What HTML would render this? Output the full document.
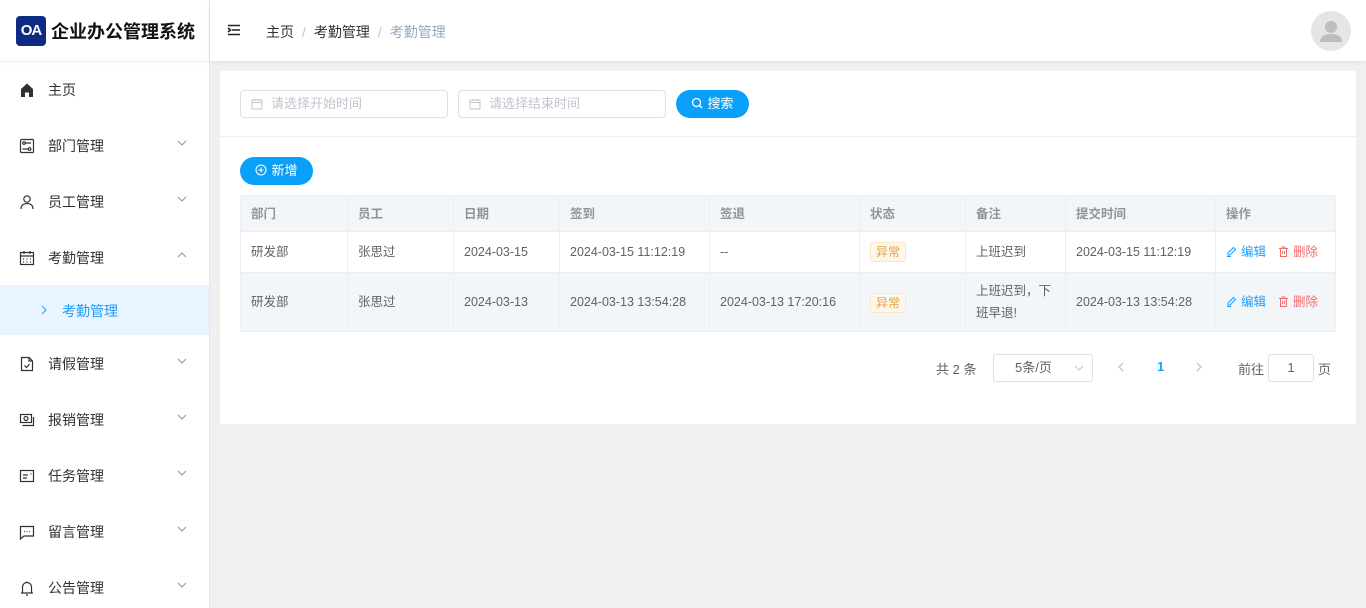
<!DOCTYPE html>
<html><head><meta charset="utf-8"><style>
*{box-sizing:border-box;margin:0;padding:0}
body{width:1366px;height:608px;overflow:hidden;font-family:"Liberation Sans","Noto Sans CJK SC",sans-serif;font-size:13px;color:#303133;background:#f0f0f0;position:relative}
.side{position:absolute;left:0;top:0;width:210px;height:608px;background:#fff;border-right:1px solid #e6e6e6}
.logo{position:absolute;left:16px;top:16px;height:30px;display:flex;align-items:center;white-space:nowrap}
.logo b{display:inline-block;width:30px;height:30px;background:#0d2b80;color:#fff;border-radius:4px;font-size:15px;line-height:30px;text-align:center;font-weight:bold;letter-spacing:-1px}
.logo span{margin-left:5px;font-size:18px;font-weight:bold;color:#111}
.logoline{position:absolute;left:0;top:61px;width:209px;height:1px;background:#eee;box-shadow:0 1px 4px rgba(0,0,0,.06)}
.mi{position:absolute;left:0;width:209px;height:30px;display:flex;align-items:center;font-size:14px;color:#303133}
.mi svg{position:absolute;left:19px;width:16px;height:16px}
.mi .t{position:absolute;left:48px}
.mi .ar{position:absolute;left:177px;top:7px;width:10px;height:10px}
.sub{position:absolute;left:0;top:285px;width:209px;height:50px;background:#e8f4ff;color:#1a9fff;font-size:14px}
.hdr{position:absolute;left:210px;top:0;width:1156px;height:61px;background:#fff;box-shadow:0 1px 4px rgba(0,0,0,.08)}
.bc{position:absolute;left:56px;top:22px;font-size:14px;color:#303133}
.bc i{font-style:normal;color:#c0c4cc;margin:0 8px}
.avatar{position:absolute;left:1101px;top:11px;width:40px;height:40px;border-radius:50%;background:#e5e5e5;overflow:hidden}
.card{position:absolute;left:220px;top:71px;width:1136px;height:353px;background:#fff}
.inp{position:absolute;top:19px;height:28px;width:208px;border:1px solid #dcdfe6;border-radius:4px;color:#c0c4cc;font-size:13px;line-height:26px;padding-left:30px}
.inp svg{position:absolute;left:10px;top:7px}
.btn{position:absolute;background:#0aa0fa;color:#fff;border-radius:14px;height:28px;font-size:13px;line-height:28px;text-align:center}
.sep{position:absolute;left:0;top:65px;width:1136px;height:1px;background:#ebeef5}
table{position:absolute;left:20px;top:124px;border-collapse:collapse;width:1095px;table-layout:fixed;font-size:12.5px}
td,th{border:1px solid #ebeef5;padding:0 10px;text-align:left;color:#606266;font-weight:normal;vertical-align:middle;line-height:20px}
th{height:36px;background:#f3f6f9;color:#909399;font-weight:bold}
tr.r1 td{height:41px}
tr.r2 td{height:59px;background:#f3f6f9;line-height:22px}
.tag{display:inline-block;border:1px solid #fbe7c8;background:#fdf6ec;color:#e6a23c;font-size:12px;height:20px;line-height:18px;padding:0 5px;border-radius:3px;vertical-align:middle}
.ed{color:#1a9fff}.del{color:#f56c6c;margin-left:12px}
.ed svg,.del svg{vertical-align:-1px;margin-right:4px}
.pg{position:absolute;top:283px;font-size:13px;color:#606266}
</style></head><body>
<div class="side">
<div class="logo"><b>OA</b><span>企业办公管理系统</span></div>
<div class="logoline"></div>
<div class="mi" style="top:75px"><svg viewBox="0 0 16 16"><path d="M2 7L8 1.5 14 7V15H10V10.5H6V15H2Z" fill="#303133"/></svg><span class="t">主页</span></div>
<div class="mi" style="top:131px"><svg viewBox="0 0 16 16" fill="none" stroke="#303133" stroke-width="1.2"><rect x="1.5" y="1.5" width="13" height="13" rx="1"/><circle cx="5" cy="5" r="1.3"/><circle cx="10.5" cy="11" r="1.3"/><path d="M6.5 5H12M3.5 11H9"/></svg><span class="t">部门管理</span><svg class="ar" viewBox="0 0 10 10" fill="none" stroke="#909399"><path d="M1 3l4 4 4-4"/></svg></div>
<div class="mi" style="top:187px"><svg viewBox="0 0 16 16" fill="none" stroke="#303133" stroke-width="1.2"><circle cx="8" cy="5" r="3.2"/><path d="M2 15c0-4 3-5.5 6-5.5s6 1.5 6 5.5"/></svg><span class="t">员工管理</span><svg class="ar" viewBox="0 0 10 10" fill="none" stroke="#909399"><path d="M1 3l4 4 4-4"/></svg></div>
<div class="mi" style="top:243px"><svg viewBox="0 0 16 16" fill="none" stroke="#303133" stroke-width="1.2"><rect x="1.5" y="2.5" width="13" height="12"/><path d="M1.5 6H14.5M5 1v3M11 1v3M4 9h1M7.5 9h1M11 9h1M4 12h1M7.5 12h1M11 12h1"/></svg><span class="t">考勤管理</span><svg class="ar" viewBox="0 0 10 10" fill="none" stroke="#909399"><path d="M1 7l4-4 4 4"/></svg></div>
<div class="sub"><svg style="position:absolute;left:40px;top:20px" width="8" height="10" viewBox="0 0 8 10" fill="none" stroke="#1a9fff"><path d="M2 1l4 4-4 4"/></svg><span style="position:absolute;left:62px;top:16px">考勤管理</span></div>
<div class="mi" style="top:349px"><svg viewBox="0 0 16 16" fill="none" stroke="#303133" stroke-width="1.2"><path d="M2.5 1.5H10L13.5 5V14.5H2.5Z M10 1.5V5H13.5"/><path d="M5.5 9.5l2 2 3-3.5"/></svg><span class="t">请假管理</span><svg class="ar" viewBox="0 0 10 10" fill="none" stroke="#909399"><path d="M1 3l4 4 4-4"/></svg></div>
<div class="mi" style="top:405px"><svg viewBox="0 0 16 16" fill="none" stroke="#303133" stroke-width="1.2"><rect x="1.5" y="2.5" width="11" height="8"/><circle cx="7" cy="6.5" r="2"/><path d="M3.5 13.5H14.5V5"/></svg><span class="t">报销管理</span><svg class="ar" viewBox="0 0 10 10" fill="none" stroke="#909399"><path d="M1 3l4 4 4-4"/></svg></div>
<div class="mi" style="top:461px"><svg viewBox="0 0 16 16" fill="none" stroke="#303133" stroke-width="1.2"><rect x="1.5" y="2.5" width="13" height="11"/><path d="M4 7h5M4 10h4M11.5 6h1"/></svg><span class="t">任务管理</span><svg class="ar" viewBox="0 0 10 10" fill="none" stroke="#909399"><path d="M1 3l4 4 4-4"/></svg></div>
<div class="mi" style="top:517px"><svg viewBox="0 0 16 16" fill="none" stroke="#303133" stroke-width="1.2"><path d="M1.5 2.5H14.5V12H5L1.5 15Z"/><path d="M5 7.5h.8M7.6 7.5h.8M10.2 7.5h.8"/></svg><span class="t">留言管理</span><svg class="ar" viewBox="0 0 10 10" fill="none" stroke="#909399"><path d="M1 3l4 4 4-4"/></svg></div>
<div class="mi" style="top:573px"><svg viewBox="0 0 16 16" fill="none" stroke="#303133" stroke-width="1.2"><path d="M3.5 13V7a4.5 4.5 0 019 0v6M2 13H14M7 15h2M8 1.5v1"/></svg><span class="t">公告管理</span><svg class="ar" viewBox="0 0 10 10" fill="none" stroke="#909399"><path d="M1 3l4 4 4-4"/></svg></div>
</div>
<div class="hdr">
<svg style="position:absolute;left:17px;top:24px" width="14" height="12" viewBox="0 0 14 12" fill="none" stroke="#222" stroke-width="1.6"><path d="M1 1.5H13M5 6H13M1 10.5H13M1 4l2.5 2L1 8"/></svg>
<div class="bc">主页<i>/</i>考勤管理<i>/</i><span style="color:#97a8be">考勤管理</span></div>
<div class="avatar"><svg width="40" height="40" viewBox="0 0 40 40"><circle cx="20" cy="16" r="6" fill="#bdbdbd"/><path d="M9 31c0-6 5-8 11-8s11 2 11 8z" fill="#bdbdbd"/></svg></div>
</div>
<div class="card">
<div class="inp" style="left:20px"><svg width="12" height="12" viewBox="0 0 12 12" fill="none" stroke="#c0c4cc"><rect x="1" y="2" width="10" height="9"/><path d="M1 4.5h10M4 1v2M8 1v2"/></svg>请选择开始时间</div>
<div class="inp" style="left:238px"><svg width="12" height="12" viewBox="0 0 12 12" fill="none" stroke="#c0c4cc"><rect x="1" y="2" width="10" height="9"/><path d="M1 4.5h10M4 1v2M8 1v2"/></svg>请选择结束时间</div>
<div class="btn" style="left:456px;top:19px;width:73px"><svg width="12" height="12" viewBox="0 0 12 12" fill="none" stroke="#fff" stroke-width="1.3" style="vertical-align:-1px;margin-right:4px"><circle cx="5.5" cy="5.5" r="4"/><path d="M8.5 8.5L11 11"/></svg>搜索</div>
<div class="sep"></div>
<div class="btn" style="left:20px;top:86px;width:73px"><svg width="12" height="12" viewBox="0 0 12 12" fill="none" stroke="#fff" stroke-width="1.1" style="vertical-align:-1px;margin-right:4px"><circle cx="6" cy="6" r="5"/><path d="M6 3.5v5M3.5 6h5"/></svg>新增</div>
<table>
<colgroup><col style="width:107px"><col style="width:106px"><col style="width:106px"><col style="width:150px"><col style="width:150px"><col style="width:106px"><col style="width:100px"><col style="width:150px"><col style="width:120px"></colgroup>
<tr><th>部门</th><th>员工</th><th>日期</th><th>签到</th><th>签退</th><th>状态</th><th>备注</th><th>提交时间</th><th>操作</th></tr>
<tr class="r1"><td>研发部</td><td>张思过</td><td>2024-03-15</td><td>2024-03-15 11:12:19</td><td>--</td><td><span class="tag">异常</span></td><td>上班迟到</td><td>2024-03-15 11:12:19</td><td><span class="ed"><svg width="11" height="11" viewBox="0 0 11 11" fill="none" stroke="#1a9fff"><path d="M7.5 1.5l2 2L4 9H2V7zM1 10.5h4"/></svg>编辑</span><span class="del"><svg width="11" height="11" viewBox="0 0 11 11" fill="none" stroke="#f56c6c"><path d="M1 2.5h9M4 2.5V1h3v1.5M2.5 2.5v8h6v-8M4.5 5v3M6.5 5v3"/></svg>删除</span></td></tr>
<tr class="r2"><td>研发部</td><td>张思过</td><td>2024-03-13</td><td>2024-03-13 13:54:28</td><td>2024-03-13 17:20:16</td><td><span class="tag">异常</span></td><td>上班迟到，下班早退!</td><td>2024-03-13 13:54:28</td><td><span class="ed"><svg width="11" height="11" viewBox="0 0 11 11" fill="none" stroke="#1a9fff"><path d="M7.5 1.5l2 2L4 9H2V7zM1 10.5h4"/></svg>编辑</span><span class="del"><svg width="11" height="11" viewBox="0 0 11 11" fill="none" stroke="#f56c6c"><path d="M1 2.5h9M4 2.5V1h3v1.5M2.5 2.5v8h6v-8M4.5 5v3M6.5 5v3"/></svg>删除</span></td></tr>
</table>
<div class="pg" style="left:716px;top:288px">共 2 条</div>
<div class="pg" style="left:773px;width:100px;height:28px;border:1px solid #dcdfe6;border-radius:3px;line-height:26px;padding-left:21px">5条/页<svg style="position:absolute;right:8px;top:10px" width="10" height="6" viewBox="0 0 10 6" fill="none" stroke="#c0c4cc"><path d="M1 1l4 4 4-4"/></svg></div>
<svg style="position:absolute;left:898px;top:291px" width="6" height="10" viewBox="0 0 6 10" fill="none" stroke="#c0c4cc" stroke-width="1.3"><path d="M5 1L1 5l4 4"/></svg>
<div class="pg" style="left:937px;top:288px;color:#1a9fff;font-weight:bold">1</div>
<svg style="position:absolute;left:976px;top:291px" width="6" height="10" viewBox="0 0 6 10" fill="none" stroke="#c0c4cc" stroke-width="1.3"><path d="M1 1l4 4-4 4"/></svg>
<div class="pg" style="left:1018px;top:288px">前往</div>
<div class="pg" style="left:1048px;width:46px;height:28px;border:1px solid #dcdfe6;border-radius:3px;line-height:26px;text-align:center">1</div>
<div class="pg" style="left:1098px;top:288px">页</div>
</div>
</body></html>
